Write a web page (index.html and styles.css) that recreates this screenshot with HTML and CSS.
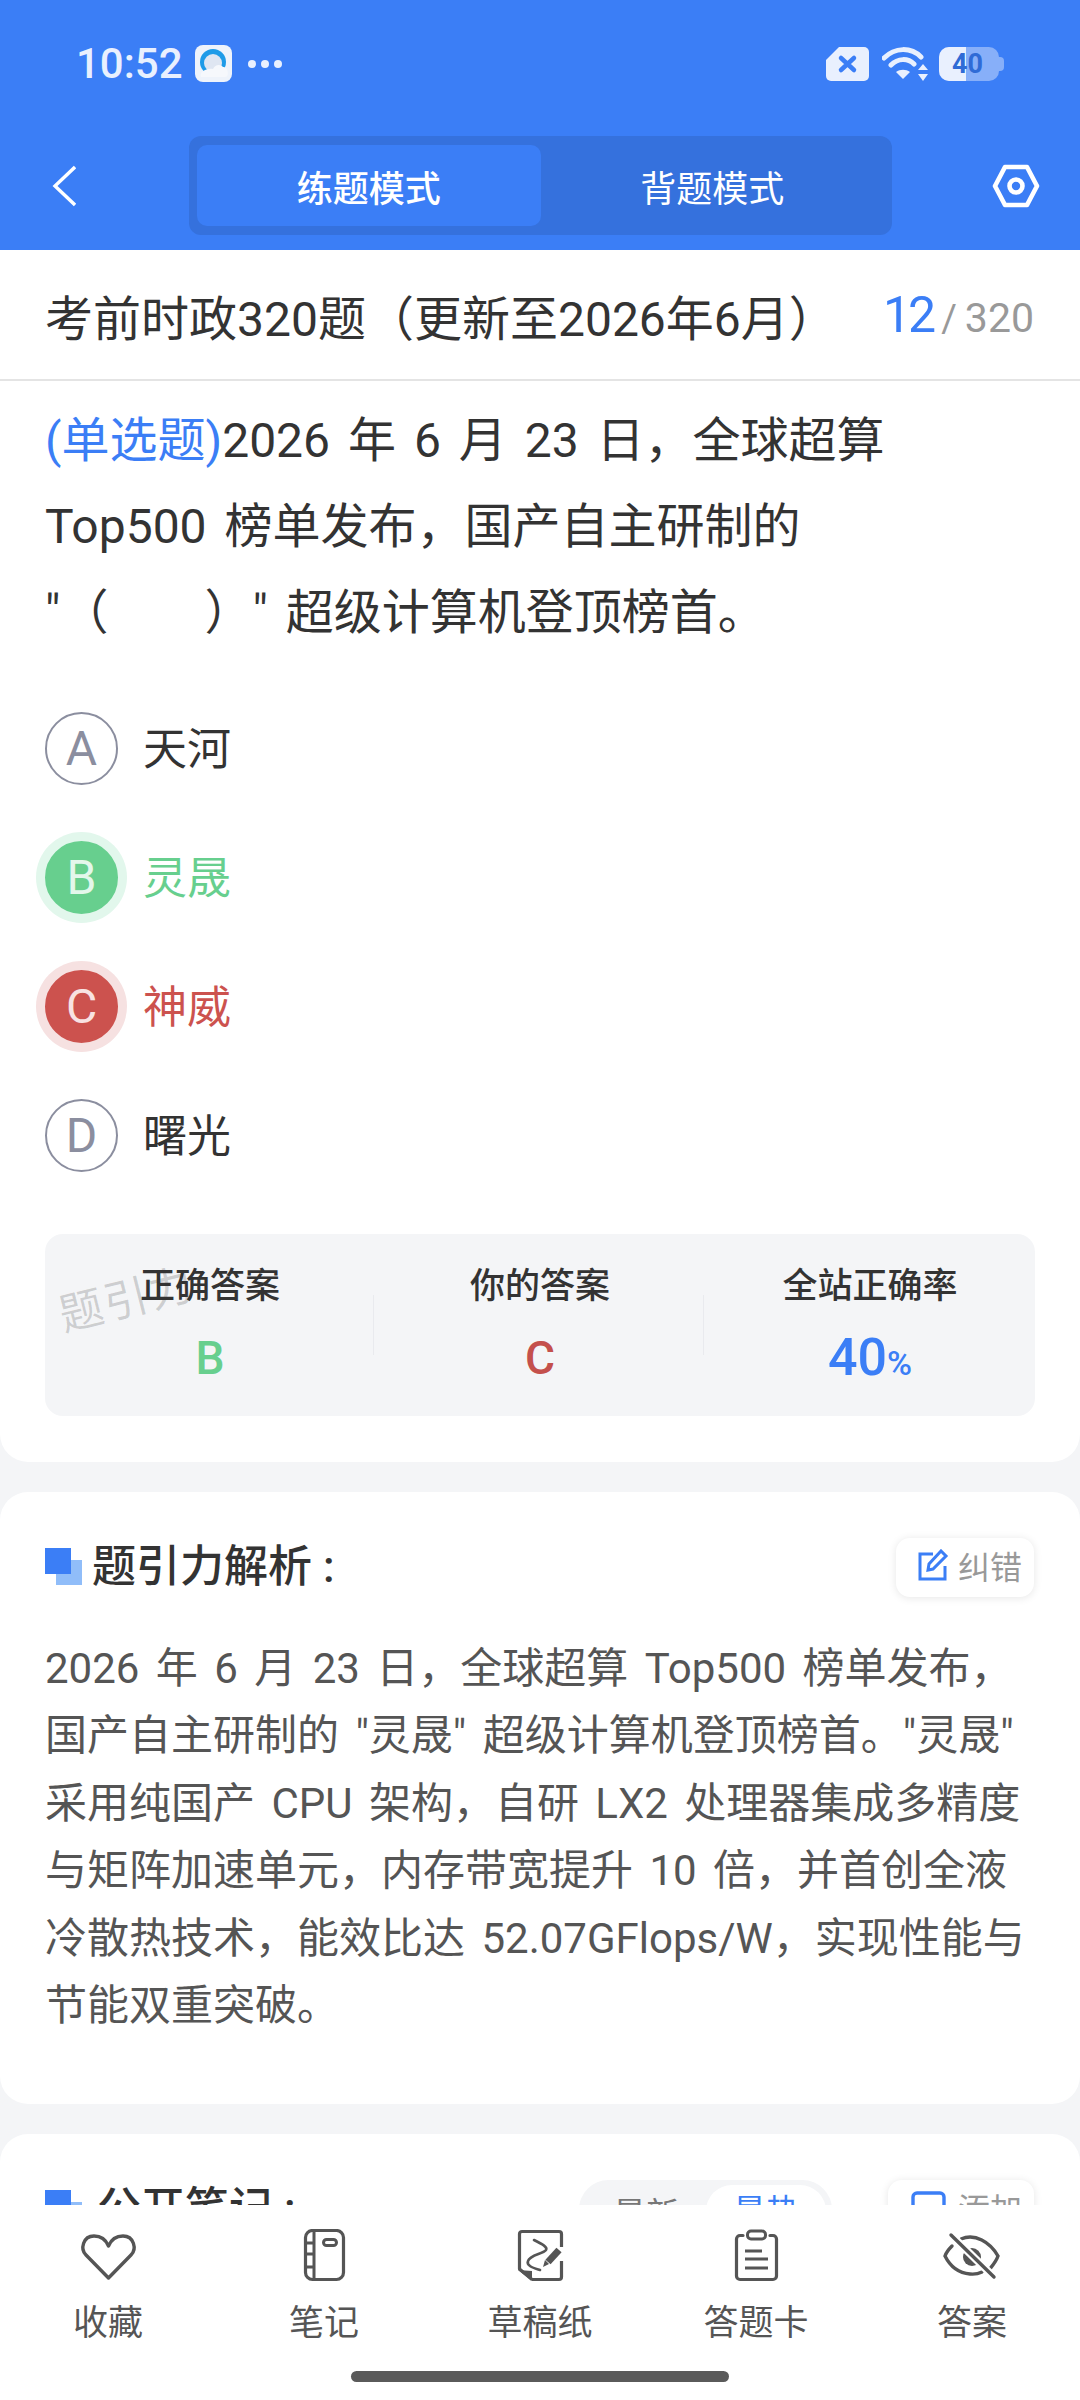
FILE: index.html
```html
<!DOCTYPE html>
<html lang="zh-CN">

<head>
  <meta charset="UTF-8" />
  <meta name="viewport" content="width=device-width, initial-scale=1.0" />
  <title>练题模式</title>
  <link rel="stylesheet" href="styles.css">
</head>

<body>
  <div class="page">

    <header class="top">
      <div class="status">
        <div class="status-left">
          <span class="time">10:52</span>
          <svg class="app-icon" viewBox="0 0 37 37">
            <rect width="37" height="37" rx="8" fill="#eef3fb" />
            <circle cx="18" cy="17" r="13" fill="#1e9be8" />
            <circle cx="18" cy="18" r="9" fill="#dfe6f2" />
            <path d="M6 32c-2-5 5-9 12-8 2-5 8-5 10-2 5-1 7 10 2 10z" fill="#f6f8fc" />
          </svg>
          <span class="dots"><i></i><i></i><i></i></span>
        </div>
        <div class="status-right">
          <svg class="sim" viewBox="0 0 43 34">
            <path d="M13 0H38a5 5 0 0 1 5 5V29a5 5 0 0 1-5 5H5a5 5 0 0 1-5-5V13z" fill="#e9f0fe" />
            <path d="M15 11l13 12M28 11L15 23" stroke="#3b7ef6" stroke-width="4.5" stroke-linecap="round" />
          </svg>
          <svg class="wifi" viewBox="0 0 46 34">
            <path d="M2 11C13 0 29 0 39 10M9 18c7-7 17-7 23-1" fill="none" stroke="#e9f0fe" stroke-width="5" stroke-linecap="round" />
            <path d="M21 32l-7-7c4-3 10-3 14 0z" fill="#e9f0fe" />
            <path d="M41 17l5 6H36zM41 34l-5-7h10z" fill="#e9f0fe" />
          </svg>
          <div class="battery">
            <span class="battery-fill"></span>
            <span class="battery-num">40</span>
            <span class="battery-cap"></span>
          </div>
        </div>
      </div>

      <div class="toolbar">
        <svg class="back" viewBox="0 0 24 42">
          <path d="M23 2L3 21l20 19" fill="none" stroke="#fff" stroke-width="3.4" />
        </svg>
        <div class="tabs">
          <div class="tab tab-active">练题模式</div>
          <div class="tab">背题模式</div>
        </div>
        <svg class="gear" viewBox="0 0 48 44">
          <path d="M13 3H35L45 22 35 41H13L3 22z" fill="none" stroke="#fff" stroke-width="4.6" stroke-linejoin="round" />
          <circle cx="24" cy="22" r="6.5" fill="none" stroke="#fff" stroke-width="4.6" />
        </svg>
      </div>
    </header>

    <div class="title-row">
      <div class="title">考前时政320题（更新至2026年6月）</div>
      <div class="counter"><b>12</b><span class="slash">/</span><span>320</span></div>
    </div>

    <main class="scroll">
      <section class="card card-question">
        <p class="question"><span class="q-type">(单选题)</span>2026 年 6 月 23 日，全球超算<br>Top500 榜单发布，国产自主研制的<br>"（　　）" 超级计算机登顶榜首。</p>

        <div class="options">
          <div class="option">
            <span class="letter">A</span><span class="option-text">天河</span>
          </div>
          <div class="option option-right">
            <span class="letter">B</span><span class="option-text">灵晟</span>
          </div>
          <div class="option option-wrong">
            <span class="letter">C</span><span class="option-text">神威</span>
          </div>
          <div class="option">
            <span class="letter">D</span><span class="option-text">曙光</span>
          </div>
        </div>

        <div class="answers">
          <div class="watermark">题引力</div>
          <div class="answer">
            <div class="answer-label">正确答案</div>
            <div class="answer-value green">B</div>
          </div>
          <div class="answer">
            <div class="answer-label">你的答案</div>
            <div class="answer-value red">C</div>
          </div>
          <div class="answer">
            <div class="answer-label">全站正确率</div>
            <div class="answer-value blue rate">40<small>%</small></div>
          </div>
        </div>
      </section>

      <section class="card card-analysis">
        <div class="card-head">
          <h2><span class="mark"></span>题引力解析 :</h2>
          <div class="chip">
            <svg viewBox="0 0 32 32">
              <path d="M16 5H3v25h25V17" fill="none" stroke="#3b7ef6" stroke-width="3" />
              <path d="M11 21l1-6L24 2l5 5-13 13z" fill="none" stroke="#3b7ef6" stroke-width="3" />
            </svg>
            纠错
          </div>
        </div>
        <p class="analysis">2026 年 6 月 23 日，全球超算 Top500 榜单发布，<br>国产自主研制的 "灵晟" 超级计算机登顶榜首。"灵晟"<br>采用纯国产 CPU 架构，自研 LX2 处理器集成多精度<br>与矩阵加速单元，内存带宽提升 10 倍，并首创全液<br>冷散热技术，能效比达 52.07GFlops/W，实现性能与<br>节能双重突破。</p>
      </section>

      <section class="card card-notes">
        <div class="card-head">
          <h2><span class="mark"></span>公开笔记 :</h2>
          <div class="head-right">
            <div class="sort">
              <span>最新</span>
              <span class="sort-active">最热</span>
            </div>
            <div class="chip chip-add">
              <svg viewBox="0 0 35 32">
                <rect x="2" y="2" width="31" height="28" rx="4" fill="none" stroke="#3b7ef6" stroke-width="3.4" />
              </svg>
              添加
            </div>
          </div>
        </div>
      </section>
    </main>

    <nav class="bottom">
      <div class="nav-items">
        <div class="nav-item">
          <svg viewBox="0 0 60 56">
            <path d="M30.5 49L8 26C2 20 5 7 16 7c7 0 12 4 14.500 10C33 11 38 7 45 7c11 0 14 13 8 19z" fill="none" stroke="#555" stroke-width="3.4" stroke-linejoin="round" />
          </svg>
          <span>收藏</span>
        </div>
        <div class="nav-item">
          <svg viewBox="0 0 60 56">
            <rect x="11.500" y="1.500" width="38" height="49" rx="7" fill="none" stroke="#555" stroke-width="3.2" />
            <path d="M20 2V50M11 14h9M11 25h9M11 38h9" fill="none" stroke="#555" stroke-width="3" />
            <rect x="29.500" y="10.500" width="13" height="6" rx="3" fill="none" stroke="#555" stroke-width="3" />
          </svg>
          <span>笔记</span>
        </div>
        <div class="nav-item">
          <svg viewBox="0 0 60 56">
            <path d="M22 50.500H49a2.500 2.500 0 0 0 2.500-2.500V32M51.500 18V5A2.500 2.500 0 0 0 49 2.500H12A2.500 2.500 0 0 0 9.500 5V40L22 50.500" fill="none" stroke="#555" stroke-width="3.2" stroke-linejoin="round" />
            <path d="M8 41L22 42V52z" fill="#555" />
            <path d="M24 11C32 15 38 18 36 21 33 25 20 26 18 32 16 37 24 39 30 41" fill="none" stroke="#555" stroke-width="2.6" stroke-linecap="round" />
            <path d="M38 33L49 21" fill="none" stroke="#555" stroke-width="7" />
            <path d="M33 38l2-7 4 4z" fill="#555" />
          </svg>
          <span>草稿纸</span>
        </div>
        <div class="nav-item">
          <svg viewBox="0 0 60 56">
            <path d="M17 6.500H14A3.500 3.500 0 0 0 10.500 10V47a3.500 3.500 0 0 0 3.500 3.500H47a3.500 3.500 0 0 0 3.500-3.500V10A3.500 3.500 0 0 0 47 6.500H44" fill="none" stroke="#555" stroke-width="3.2" stroke-linecap="round" />
            <rect x="21.500" y="2" width="18" height="8" rx="3.500" fill="none" stroke="#555" stroke-width="3" />
            <path d="M19 22H36M19 30H42M19 39H42" fill="none" stroke="#555" stroke-width="3.2" />
          </svg>
          <span>答题卡</span>
        </div>
        <div class="nav-item">
          <svg viewBox="0 0 60 56">
            <path d="M19 10C33 4 48 13 56 27 54 33 50 37 47 41" fill="none" stroke="#555" stroke-width="3.4" stroke-linecap="round" />
            <path d="M10 17C7 20 4 24 3 27 8 37 16 44 28 45 33 45.500 37 44.500 40 43" fill="none" stroke="#555" stroke-width="3.4" stroke-linecap="round" />
            <circle cx="30" cy="28" r="9" fill="#555" />
            <path d="M9 6L52 48" fill="none" stroke="#fff" stroke-width="8" />
            <path d="M9 6L52 48" fill="none" stroke="#555" stroke-width="3.4" stroke-linecap="round" />
          </svg>
          <span>答案</span>
        </div>
      </div>
      <div class="home-bar"></div>
    </nav>

  </div>
</body>

</html>
```

FILE: styles.css
```css
* {
  box-sizing: border-box;
}

body {
  margin: 0;
  font-family: Roboto, "Noto Sans CJK SC", sans-serif;
  color: #333;
  background: #f4f5f7;
}

.page {
  width: 1080px;
  height: 2400px;
  display: flex;
  flex-direction: column;
  overflow: hidden;
}

.top {
  height: 250px;
  background: #3b7ef6;
  flex-shrink: 0;
}

.status {
  height: 136px;
  padding: 45px 81px 0 76px;
  display: flex;
  justify-content: space-between;
  align-items: flex-start;
}

.status-left {
  display: flex;
  align-items: center;
  height: 37px;
}

.time {
  font-size: 42px;
  font-weight: 500;
  color: #e9f0fe;
  width: 119px;
}

.app-icon {
  width: 37px;
  height: 37px;
}

.dots {
  display: flex;
  gap: 5px;
  margin-left: 16px;
}

.dots i {
  width: 8px;
  height: 8px;
  border-radius: 50%;
  background: #e9f0fe;
}

.status-right {
  display: flex;
  align-items: center;
  height: 35px;
  margin-top: 1px;
}

.sim {
  width: 43px;
  height: 34px;
}

.wifi {
  width: 46px;
  height: 34px;
  margin: 0 11px 0 13px;
}

.battery {
  position: relative;
  width: 60px;
  height: 34px;
  border-radius: 10px;
  background: #87aff9;
}

.battery-fill {
  position: absolute;
  left: 0;
  top: 0;
  width: 27px;
  height: 34px;
  background: #e9f0fe;
  border-radius: 10px 0 0 10px;
}

.battery-num {
  position: absolute;
  left: 13px;
  top: 0;
  line-height: 34px;
  font-size: 27px;
  font-weight: 700;
  color: #2f6bd6;
}

.battery-cap {
  position: absolute;
  right: -5px;
  top: 10px;
  width: 5px;
  height: 14px;
  background: #87aff9;
  border-radius: 0 4px 4px 0;
}

.toolbar {
  height: 99px;
  padding: 0 40px 0 52px;
  display: flex;
  align-items: center;
  justify-content: space-between;
}

.back {
  width: 24px;
  height: 42px;
}

.gear {
  width: 48px;
  height: 44px;
}

.tabs {
  width: 703px;
  height: 99px;
  padding: 9px 8px;
  margin-left: 113px;
  margin-right: 100px;
  background: #3571dd;
  border-radius: 12px;
  display: flex;
  flex-shrink: 0;
}

.tab {
  flex: 1;
  display: flex;
  align-items: center;
  justify-content: center;
  font-size: 36px;
  color: #fff;
  border-radius: 10px;
}

.tab-active {
  background: #3b7ef6;
  font-weight: 500;
}

.title-row {
  height: 131px;
  padding: 0 46px 0 45px;
  background: #fff;
  border-bottom: 2px solid #e4e4e4;
  display: flex;
  align-items: center;
  justify-content: space-between;
  flex-shrink: 0;
}

.title {
  font-size: 48px;
  white-space: nowrap;
}

.counter {
  display: flex;
  align-items: baseline;
  color: #999;
  font-size: 41px;
}

.counter b {
  font-size: 50px;
  font-weight: 400;
  letter-spacing: -3px;
  color: #3b7ef6;
}

.slash {
  margin: 0 8px;
  font-size: 38px;
}

.scroll {
  flex: 1;
  min-height: 0;
  overflow: hidden;
}

.card {
  background: #fff;
  border-radius: 28px;
  margin-bottom: 30px;
}

.card-question {
  border-radius: 0 0 28px 28px;
  padding: 0 45px 46px;
}

.question {
  margin: 0;
  padding-top: 17px;
  font-size: 48px;
  line-height: 86px;
  word-spacing: 6px;
}

.q-type {
  color: #3b7ef6;
}

.options {
  margin-top: 28px;
}

.option {
  height: 129px;
  display: flex;
  align-items: center;
  gap: 25px;
  font-size: 44px;
}

.option-text {
  margin-bottom: 6px;
}

.letter {
  width: 73px;
  height: 73px;
  border: 2px solid #8b8e9f;
  border-radius: 50%;
  color: #8b8e9f;
  font-size: 48px;
  display: flex;
  align-items: center;
  justify-content: center;
}

.option-right {
  color: #67cf8e;
}

.option-right .letter {
  background: #67cf8e;
  border-color: #67cf8e;
  color: #e3f7eb;
  box-shadow: 0 0 0 9px #e2f7ec;
}

.option-wrong {
  color: #cc524e;
}

.option-wrong .letter {
  background: #cc524e;
  border-color: #cc524e;
  color: #f8e2e2;
  box-shadow: 0 0 0 9px #f6e1e1;
}

.answers {
  position: relative;
  height: 182px;
  margin-top: 34px;
  background: #f4f5f7;
  border-radius: 18px;
  display: grid;
  grid-template-columns: repeat(3, 1fr);
}

.watermark {
  position: absolute;
  left: 12px;
  top: 30px;
  font-size: 44px;
  letter-spacing: 2px;
  color: rgba(0, 0, 0, 0.16);
  transform: rotate(-14deg);
}

.answer {
  padding-top: 26px;
  text-align: center;
  position: relative;
}

.answer + .answer::before {
  content: "";
  position: absolute;
  left: -2px;
  top: 61px;
  height: 60px;
  width: 1px;
  background: #e9eaee;
}

.answer-label {
  font-size: 35px;
  font-weight: 500;
  line-height: 54px;
}

.answer-value {
  margin-top: 17px;
  font-size: 46px;
  font-weight: 500;
  line-height: 54px;
}

.rate {
  font-size: 52px;
}

.answer-value small {
  font-size: 34px;
}

.green {
  color: #67cf8e;
}

.red {
  color: #c4504c;
}

.blue {
  color: #3b7ef6;
}

.card-head {
  display: flex;
  justify-content: space-between;
  align-items: center;
  padding: 45px 46px 0 45px;
}

h2 {
  margin: 0;
  font-size: 44px;
  font-weight: 500;
  line-height: 60px;
  display: flex;
  align-items: center;
  gap: 21px;
  color: #333;
}

.card-notes h2 {
  gap: 26px;
}

.mark {
  position: relative;
  width: 26px;
  height: 26px;
  margin-top: -12px;
}

.mark::before {
  content: "";
  position: absolute;
  left: 11px;
  top: 12px;
  width: 26px;
  height: 25px;
  background: #90bdf9;
}

.mark::after {
  content: "";
  position: absolute;
  left: 0;
  top: 0;
  width: 26px;
  height: 26px;
  background: #3b7ef6;
}

.chip {
  display: flex;
  align-items: center;
  gap: 9px;
  height: 59px;
  padding: 0 12px 4px 21px;
  border-radius: 14px;
  background: #fff;
  box-shadow: 0 1px 8px rgba(0, 0, 0, 0.1);
  font-size: 32px;
  color: #999;
}

.chip svg {
  width: 32px;
  height: 32px;
}

.chip-add {
  padding-left: 23px;
  gap: 12px;
}

.chip-add svg {
  width: 35px;
}

.analysis {
  margin: 0;
  padding: 38px 45px 65px;
  font-size: 42px;
  line-height: 67.4px;
  word-spacing: 6px;
  color: #555;
}

.head-right {
  display: flex;
  align-items: center;
  gap: 56px;
}

.sort {
  height: 59px;
  width: 253px;
  background: #f4f5f7;
  border-radius: 30px;
  display: flex;
  align-items: center;
  padding: 5px 6px 0 34px;
  justify-content: space-between;
  font-size: 33px;
  color: #777;
}

.sort-active {
  width: 120px;
  height: 54px;
  border-radius: 26px;
  background: #fff;
  color: #3b7ef6;
  text-align: center;
}

.bottom {
  height: 195px;
  background: #fff;
  flex-shrink: 0;
  position: relative;
}

.nav-items {
  display: grid;
  grid-template-columns: repeat(5, 216px);
}

.nav-item {
  display: flex;
  flex-direction: column;
  align-items: center;
  padding-top: 24px;
  font-size: 35px;
  color: #555;
}

.nav-item svg {
  width: 60px;
  height: 56px;
}

.nav-item span {
  margin-top: 16px;
  line-height: 46px;
}

.home-bar {
  position: absolute;
  left: 351px;
  top: 166px;
  width: 378px;
  height: 11px;
  border-radius: 6px;
  background: #5a5a5a;
}
```
